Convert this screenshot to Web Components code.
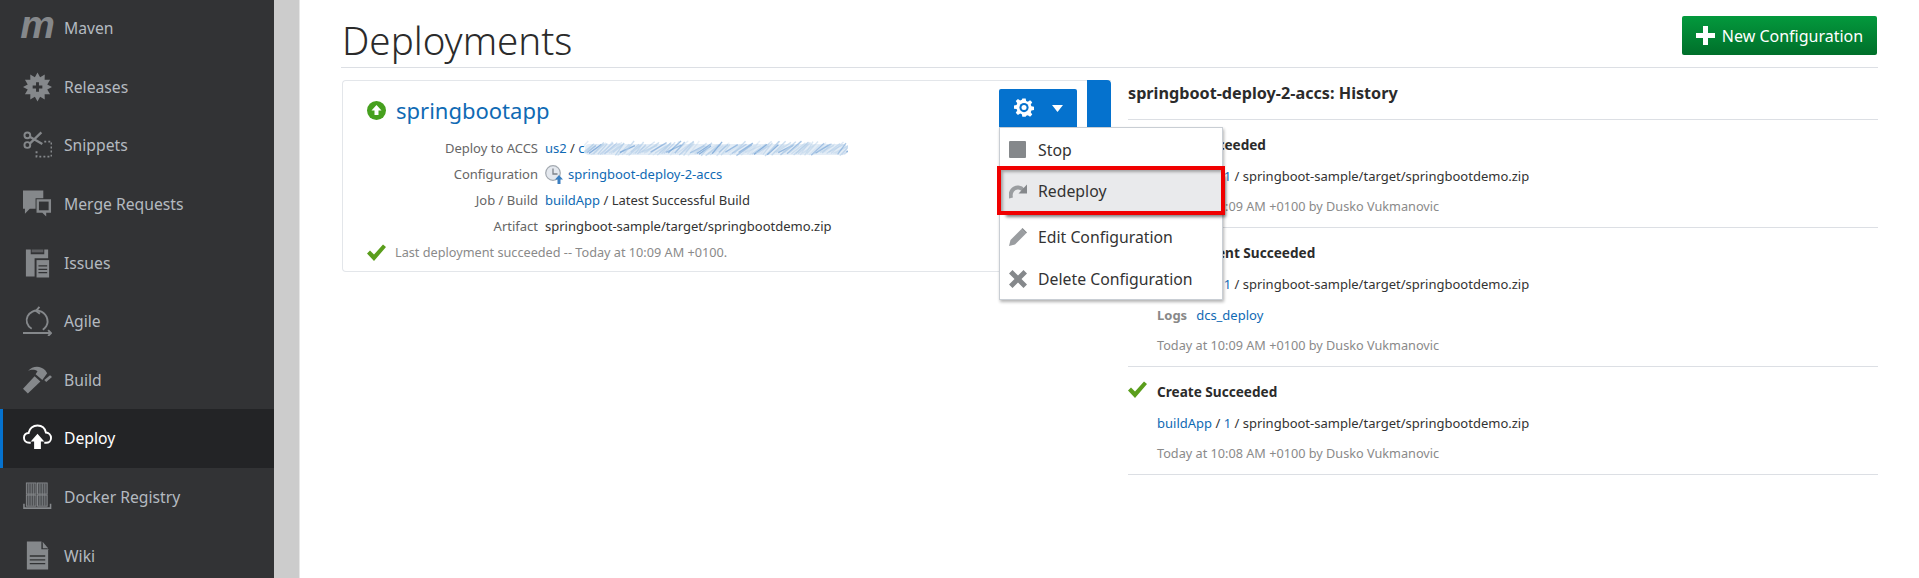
<!DOCTYPE html>
<html>
<head>
<meta charset="utf-8">
<title>Deployments</title>
<style>
  html, body { margin: 0; padding: 0; height: 578px; overflow: hidden; background: #fff; }
  body { font-family: "Noto Sans", "Open Sans", sans-serif; color: #333; }
</style>
</head>
<body>
<app-shell>
  <side-nav slot="nav">
    <nav-item icon="maven">Maven</nav-item>
    <nav-item icon="releases">Releases</nav-item>
    <nav-item icon="snippets">Snippets</nav-item>
    <nav-item icon="merge">Merge Requests</nav-item>
    <nav-item icon="issues">Issues</nav-item>
    <nav-item icon="agile">Agile</nav-item>
    <nav-item icon="build">Build</nav-item>
    <nav-item icon="deploy" active>Deploy</nav-item>
    <nav-item icon="docker">Docker Registry</nav-item>
    <nav-item icon="wiki">Wiki</nav-item>
  </side-nav>
  <page-header>Deployments</page-header>
  <deployment-card slot="left"></deployment-card>
  <history-panel slot="right" heading="springboot-deploy-2-accs: History">
    <history-item title="Start Succeeded" time="Today at 10:09 AM +0100 by Dusko Vukmanovic"></history-item>
    <history-item title="Deployment Succeeded" time="Today at 10:09 AM +0100 by Dusko Vukmanovic" logs="dcs_deploy"></history-item>
    <history-item title="Create Succeeded" time="Today at 10:08 AM +0100 by Dusko Vukmanovic" check></history-item>
  </history-panel>
</app-shell>

<script>
const CHECK = `<svg width="19" height="17" viewBox="0 0 19 17"><path d="M0 9.500 3 6.500 7 10.500 16 0.500 19 3 7 17Z" fill="#5a9e1c"/></svg>`;

function star(cx, cy, r1, r2, n) {
  let pts = [];
  for (let i = 0; i < n * 2; i++) {
    const r = i % 2 ? r2 : r1;
    const a = Math.PI * i / n;
    pts.push((cx + r * Math.sin(a)).toFixed(1) + "," + (cy - r * Math.cos(a)).toFixed(1));
  }
  return pts.join(" ");
}

// the blurred-out account name: diagonal streaks, same every run
function smear(w, h) {
  let seed = 7;
  const rnd = () => (seed = (seed * 16807) % 2147483647) / 2147483647;
  let out = "";
  for (let x = -6; x < w; x += 2.2) {
    const y1 = 2 + rnd() * 5;
    const y2 = h - 1 - rnd() * 4;
    const dx = 8 + rnd() * 8;
    const o = (0.25 + rnd() * 0.55).toFixed(2);
    const c = rnd() > 0.75 ? "#6f9fd4" : "#b5cfe8";
    out += `<path d="M${x.toFixed(1)} ${y2.toFixed(1)}L${(x + dx).toFixed(1)} ${y1.toFixed(1)}" stroke="${c}" stroke-opacity="${o}" stroke-width="1.400"/>`;
  }
  return out;
}

const NAV_ICONS = {
  maven: `<span class="m">m</span>`,
  releases: `<svg width="30" height="30" viewBox="0 0 30 30"><polygon points="${star(15, 15, 15, 10.5, 12)}" fill="#85888b"/><path d="M13.500 10h3v3.500H20v3h-3.500V20h-3v-3.500H10v-3h3.500Z" fill="#323335"/></svg>`,
  snippets: `<svg width="30" height="30" viewBox="0 0 30 30" fill="none" stroke="#85888b"><circle cx="4.500" cy="5" r="3" stroke-width="2"/><circle cx="4.500" cy="15" r="3" stroke-width="2"/><path d="M7 6.500 20 14M7 13.500 19 2" stroke-width="2.400"/><path d="M14 21.500v5.500H29.500V11.500H22" stroke-width="2" stroke-dasharray="2 2.200"/></svg>`,
  merge: `<svg width="30" height="30" viewBox="0 0 30 30"><path d="M0 1h21v8H13v11H7l-5 5v-5H0Z" fill="#85888b"/><path d="M14 10h15v14h-5v4l-4-4h-6Z" fill="#85888b"/><rect x="16.500" y="12.500" width="10" height="9" fill="#323335"/></svg>`,
  issues: `<svg width="30" height="30" viewBox="0 0 30 30"><path d="M3 1h5v5h14V1h4v9H12v19H3Z" fill="#85888b"/><path d="M9 1h12v3H9Z" fill="#85888b" opacity=".5"/><path d="M14 12h13v18H14Z" fill="#85888b"/><path d="M16 18h9M16 21.500h9M16 25h9" stroke="#323335" stroke-width="1.300"/></svg>`,
  agile: `<svg width="30" height="30" viewBox="0 0 30 30" fill="none" stroke="#85888b" stroke-width="2"><path d="M9 23C4 20 2.500 14.500 4.800 10 7 5.500 12 3.500 16.500 4.500 24 6 27.500 14.500 24 20.500 23 22 22 23 20.500 24"/><path d="M17 0.500 13.500 4.500 17.500 7.500"/><path d="M0 27.500H28M26 24.500l3 3-3 3"/></svg>`,
  build: `<svg width="30" height="30" viewBox="0 0 30 30" fill="#85888b"><path d="M0 24 12 11 18 16.500 5 29Z"/><path d="M5 6C10 0 18 0 23 5L25 8 20 15 13 9 15 6C12 4 8 4 5 6Z"/><path d="M22 15 28 10 30 12 24 17Z"/></svg>`,
  deploy: `<svg width="30" height="30" viewBox="0 0 30 30"><path d="M8 20H6.500C3 20 1 17.500 1 14.800 1 12 3 10 5.800 9.800 6.500 5 10.500 2 15 2c4.500 0 7.800 3 8.700 7.300C26.500 9.500 29 11.800 29 15c0 3-2.300 5-5 5H22" fill="none" stroke="#fff" stroke-width="2"/><path d="M15 10.500 22 18.500H18.500V26.500H11.500V18.500H8Z" fill="#fff"/></svg>`,
  docker: `<svg width="30" height="30" viewBox="0 0 30 30"><g fill="none" stroke="#85888b"><rect x="3.500" y="0.500" width="10" height="11.500" fill="#85888b" fill-opacity=".35"/><rect x="15" y="0.500" width="10" height="11.500" fill="#85888b" fill-opacity=".35"/><rect x="3.500" y="13" width="10" height="11.500" fill="#85888b" fill-opacity=".35"/><rect x="15" y="13" width="10" height="11.500" fill="#85888b" fill-opacity=".35"/><path d="M6 1v23M8.500 1v23M11 1v23M17.500 1v23M20 1v23M22.500 1v23" stroke-width=".8"/><path d="M1 22v4.500H28.500V22" stroke-width="1.600"/></g></svg>`,
  wiki: `<svg width="30" height="30" viewBox="0 0 30 30"><path d="M4 0H19L26 8V29H4Z" fill="#85888b"/><path d="M19 0V8H26" fill="#323335"/><path d="M20.500 0.500 26 7H20.500Z" fill="#85888b"/><path d="M7 15H23M7 19H23M7 23H23" stroke="#323335" stroke-width="1.300"/></svg>`
};

class AppShell extends HTMLElement {
  constructor() {
    super();
    this.attachShadow({ mode: "open" }).innerHTML = `
      <style>
        :host { display: flex; height: 578px; overflow: hidden; }
        .side { width: 274px; flex: none; background: #323335; overflow: hidden; }
        .strip { width: 25px; flex: none; background: #cccccc; border-right: 1px solid #e6e6e6; }
        main { flex: 1; min-width: 0; padding: 0 41px; }
        .cols { display: flex; gap: 17px; margin-left: 1px; }
        .left { width: 769px; flex: none; }
        .right { flex: 1; min-width: 0; }
      </style>
      <div class="side"><slot name="nav"></slot></div>
      <div class="strip"></div>
      <main>
        <slot></slot>
        <div class="cols">
          <div class="left"><slot name="left"></slot></div>
          <div class="right"><slot name="right"></slot></div>
        </div>
      </main>`;
  }
}

class SideNav extends HTMLElement {
  constructor() {
    super();
    this.attachShadow({ mode: "open" }).innerHTML = `
      <style>
        :host { display: block; margin-top: -1px; }
      </style>
      <slot></slot>`;
  }
}

class NavItem extends HTMLElement {
  constructor() {
    super();
    this.attachShadow({ mode: "open" });
  }

  connectedCallback() {
    this.shadowRoot.innerHTML = `
      <style>
        :host { display: flex; align-items: center; height: 58.6px; padding-left: 23px; gap: 12px; font-size: 15.7px; color: #b4bac0; box-sizing: border-box; }
        :host([active]) { background: #232426; box-shadow: inset 3px 0 0 #0572ce; color: #fff; }
        .icon { width: 29px; height: 30px; flex: none; display: flex; align-items: center; justify-content: center; }
        svg { display: block; }
        .m { font: italic bold 39px/30px "Liberation Sans", sans-serif; color: #85888b; margin-top: -7px; }
      </style>
      <span class="icon">${NAV_ICONS[this.getAttribute("icon")]}</span>
      <slot></slot>`;
  }
}

class PageHeader extends HTMLElement {
  constructor() {
    super();
    this.attachShadow({ mode: "open" }).innerHTML = `
      <style>
        :host { display: flex; justify-content: space-between; align-items: flex-start; height: 67px; border-bottom: 1px solid #dcdfe4; padding-right: 1px; }
        h1 { margin: 13px 0 0 1px; font-size: 38.5px; line-height: 54px; font-weight: 300; color: #2b2b2b; }
        button { margin-top: 16px; width: 195px; height: 39px; border: 0; border-radius: 2px; padding: 0; background: linear-gradient(#03993d, #006f2a); color: #fff; font: 16px "Noto Sans", sans-serif; display: flex; align-items: center; justify-content: center; gap: 7px; }
        svg { display: block; }
      </style>
      <h1><slot></slot></h1>
      <button><svg width="19" height="19" viewBox="0 0 19 19"><path d="M7 0h5v7h7v5h-7v7H7v-7H0V7h7Z" fill="#fff"/></svg>New Configuration</button>`;
  }
}

class ActionMenu extends HTMLElement {
  constructor() {
    super();
    this.attachShadow({ mode: "open" }).innerHTML = `
      <style>
        :host { display: block; position: relative; font-size: 15.8px; }
        button { width: 78px; height: 38px; border: 0; padding: 0; border-radius: 2px 2px 0 0; background: #0572ce; display: flex; align-items: center; gap: 18px; justify-content: center; }
        svg { display: block; }
        .menu { position: absolute; top: 100%; left: 0; width: 224px; box-sizing: border-box; height: 173px; padding-top: 1px; background: #fff; border: 1px solid #c9ced4; box-shadow: 1px 2px 3px rgba(0,0,0,.3); color: #333; }
        .item { display: flex; align-items: center; gap: 11px; height: 42px; padding-left: 9px; }
        .item svg { width: 18px; height: 18px; flex: none; }
        .hot { height: 41px; margin: -1px 1px 5px 1px; padding-left: 8px; background: #e9eaec; outline: 4px solid #f00000; box-shadow: 5px 6px 3px rgba(0,0,0,.5), inset 2px 2px 3px rgba(0,0,0,.3); position: relative; }
      </style>
      <button>
        <svg width="20" height="20" viewBox="0 0 24 24" fill="#fff"><path d="M10 1h4l.6 3.100 2 .8L19.300 3.100l2.600 2.600-1.800 2.700.8 2 3.100.6v4l-3.100.6-.8 2 1.800 2.700-2.600 2.600-2.700-1.800-2 .8L14 23h-4l-.6-3.100-2-.8-2.700 1.800-2.600-2.600 1.800-2.700-.8-2L0 13.500v-4l3.100-.6.800-2L2.100 4.200 4.700 1.600l2.700 1.800 2-.8Z" transform="translate(0 -.5)"/><circle cx="12" cy="11.500" r="5.500" fill="#0572ce"/><circle cx="12" cy="11.500" r="3" fill="#fff"/></svg>
        <svg width="11" height="7" viewBox="0 0 11 7"><path d="M0 0H11L5.500 7Z" fill="#fff"/></svg>
      </button>
      <div class="menu">
        <div class="item"><svg viewBox="0 0 18 18"><rect width="17" height="17" rx="1" fill="#85888b"/></svg>Stop</div>
        <div class="item hot"><svg viewBox="0 0 18 18" fill="none"><path d="M2 16C.5 10 4.500 5 9.500 5.500 11.500 5.700 13 6.500 14 8" stroke="#9a9da0" stroke-width="4"/><path d="M9.500 11.500H18.500V2Z" fill="#85888b"/></svg>Redeploy</div>
        <div class="item"><svg viewBox="0 0 18 18"><path d="M0 18 1.500 12 12.500 1 17 5.500 6 16.500Z" fill="#9a9da0"/><path d="M13.500 0 18 4.500 17 5.500 12.500 1Z" fill="#85888b"/></svg>Edit Configuration</div>
        <div class="item"><svg viewBox="0 0 18 18"><path d="M3.500 0 9 5.500 14.500 0 18 3.500 12.500 9 18 14.500 14.500 18 9 12.500 3.500 18 0 14.500 5.500 9 0 3.500Z" fill="#85888b"/></svg>Delete Configuration</div>
      </div>`;
  }
}

class DeploymentCard extends HTMLElement {
  constructor() {
    super();
    this.attachShadow({ mode: "open" }).innerHTML = `
      <style>
        :host { display: flex; position: relative; z-index: 2; height: 192px; margin-top: 12px; box-sizing: border-box; border: 1px solid #e3e6ea; border-right: 0; border-radius: 4px 0 0 4px; font-size: 13px; }
        .body { flex: 1; min-width: 0; }
        .top { display: flex; justify-content: space-between; align-items: flex-start; padding: 8px 10px 0 24px; height: 46px; }
        .name { display: flex; align-items: center; gap: 10px; height: 42px; font-size: 22px; color: #0f6ab4; }
        .tab { width: 24px; height: 47px; flex: none; margin-top: -1px; background: #0572ce; border-radius: 0 4px 0 0; }
        .rows { display: grid; grid-template-columns: 195px 1fr; column-gap: 7px; grid-auto-rows: 26px; align-items: center; }
        .k { text-align: right; color: #666; }
        .v { display: flex; align-items: center; color: #333; white-space: pre; }
        a { color: #0f6ab4; text-decoration: none; }
        svg { display: block; flex: none; }
        .smear { margin-left: -1px; }
        .status { display: flex; align-items: center; gap: 9px; padding-left: 24px; height: 26px; color: #8a8a8a; font-size: 12.7px; }
      </style>
      <div class="body">
        <div class="top">
          <div class="name">
            <svg width="19" height="19" viewBox="0 0 19 19"><circle cx="9.500" cy="9.500" r="9.500" fill="#46a01e"/><path d="M9.500 4 14.500 9.500H11.500V14H7.500V9.500H4.500Z" fill="#fff"/></svg>
            <a>springbootapp</a>
          </div>
          <action-menu></action-menu>
        </div>
        <div class="rows">
          <div class="k">Deploy to ACCS</div>
          <div class="v"><a>us2</a> / <a>c</a><svg class="smear" width="264" height="18" viewBox="0 0 264 18">
            <defs><filter id="b" x="-2%" y="-20%" width="104%" height="140%"><feGaussianBlur stdDeviation=".7"/></filter></defs>
            <rect x="1" y="5" width="262" height="11" rx="4" fill="#e4edf6" filter="url(#b)"/>
            <g filter="url(#b)">${smear(264, 18)}</g>
          </svg></div>
          <div class="k">Configuration</div>
          <div class="v"><svg width="18" height="19" viewBox="0 0 18 19" style="margin-right:5px"><circle cx="8" cy="8" r="7.300" fill="#e4e8ee" stroke="#a3a9b0" stroke-width="1.200"/><path d="M8 3.500V9H12.500" fill="none" stroke="#7d838a" stroke-width="1.300"/><path d="M14 10 18 14.500H15.500V19H12.500V14.500H10Z" fill="#3c7fc0"/></svg><a>springboot-deploy-2-accs</a></div>
          <div class="k">Job / Build</div>
          <div class="v"><a>buildApp</a> / Latest Successful Build</div>
          <div class="k">Artifact</div>
          <div class="v">springboot-sample/target/springbootdemo.zip</div>
        </div>
        <div class="status">${CHECK}<span>Last deployment succeeded -- Today at 10:09 AM +0100.</span></div>
      </div>
      <div class="tab"></div>`;
  }
}

class HistoryPanel extends HTMLElement {
  constructor() {
    super();
    this.attachShadow({ mode: "open" });
  }

  connectedCallback() {
    this.shadowRoot.innerHTML = `
      <style>
        :host { display: block; }
        h2 { margin: 0; height: 51px; line-height: 50px; font-size: 16.2px; font-weight: 700; color: #2b2b2b; border-bottom: 1px solid #dcdfe4; }
      </style>
      <h2>${this.getAttribute("heading")}</h2>
      <slot></slot>`;
  }
}

class HistoryItem extends HTMLElement {
  constructor() {
    super();
    this.attachShadow({ mode: "open" });
  }

  connectedCallback() {
    const logs = this.getAttribute("logs");
    this.shadowRoot.innerHTML = `
      <style>
        :host { display: flex; padding: 11px 0 6px; border-bottom: 1px solid #dcdfe4; font-size: 13px; }
        .mark { width: 29px; flex: none; margin-top: 3px; }
        .line { height: 30px; line-height: 30px; white-space: pre; }
        .t { font-weight: 700; font-size: 13.6px; line-height: 28px; color: #2b2b2b; }
        .logs { height: 31px; line-height: 32px; }
        .logs b { color: #888; margin-right: 9px; }
        .when { color: #8a8a8a; font-size: 12.7px; }
        a { color: #0f6ab4; text-decoration: none; }
        svg { display: block; }
      </style>
      <div class="mark">${this.hasAttribute("check") ? CHECK : ""}</div>
      <div>
        <div class="line t">${this.getAttribute("title")}</div>
        <div class="line"><a>buildApp</a> / <a>1</a> / springboot-sample/target/springbootdemo.zip</div>
        ${logs ? `<div class="line logs"><b>Logs</b><a>${logs}</a></div>` : ""}
        <div class="line when">${this.getAttribute("time")}</div>
      </div>`;
  }
}

customElements.define("app-shell", AppShell);
customElements.define("side-nav", SideNav);
customElements.define("nav-item", NavItem);
customElements.define("page-header", PageHeader);
customElements.define("action-menu", ActionMenu);
customElements.define("deployment-card", DeploymentCard);
customElements.define("history-panel", HistoryPanel);
customElements.define("history-item", HistoryItem);
</script>
</body>
</html>
